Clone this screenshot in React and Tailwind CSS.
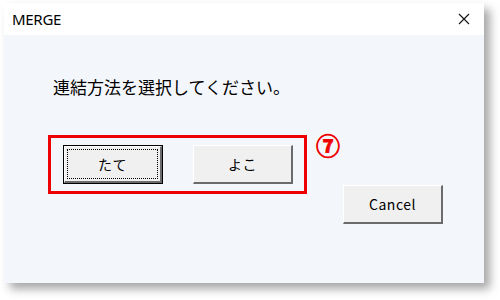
import React from 'react';

const jp = "font-['MS_UI_Gothic','Noto_Sans_CJK_JP',sans-serif]";

function Btn({ label, focused }) {
  const face = (
    <div className="flex flex-1 border-t border-l border-t-white border-l-white border-r-2 border-b-2 border-r-[#6b6b6b] border-b-[#6b6b6b] bg-[#f0f0f0]">
      <div className={`flex flex-1 items-center justify-center m-[2px] text-[14px] tracking-[0.5px] text-black ${focused ? 'border border-dotted border-black' : 'border border-transparent'}`}>
        {label}
      </div>
    </div>
  );
  if (focused) {
    return <div className="flex w-[100px] h-[39px] border border-black">{face}</div>;
  }
  return <div className="flex w-[100px] h-[39px]">{face}</div>;
}

export default function App() {
  return (
    <div className="w-[500px] h-[300px] bg-white pt-[3px] pl-[4px]">
      <div className={`w-[480px] h-[280px] flex flex-col bg-[#f3f6fb] shadow-[6px_6px_9px_rgba(0,0,0,0.35)] ${jp}`}>
        <div className="h-[32px] bg-white flex items-center justify-between pl-[8px] pr-[14px]">
          <span className="text-[15px] text-black font-['Noto_Sans',sans-serif] tracking-[-0.3px]">MERGE</span>
          <svg width="12" height="12" viewBox="0 0 12 12">
            <path d="M1 1 L11 11 M11 1 L1 11" stroke="#111" strokeWidth="1.1" fill="none" />
          </svg>
        </div>
        <div className="flex flex-col pl-[44px]">
          <p className="mt-[40px] ml-[5px] text-[17px] leading-[24px] text-black">連結方法を選択してください。</p>
          <div className="mt-[36px] flex items-start">
            <div className="w-[259px] h-[59px] border-[3px] border-[#ee0000] flex items-start pt-[7px] pl-[12px] gap-[30px]">
              <Btn label="たて" focused />
              <Btn label="よこ" />
            </div>
            <span className="ml-[9px] -mt-[4px] text-[24px] leading-[28px] font-bold text-[#ee0000] [-webkit-text-stroke:0.8px_#ee0000]">⑦</span>
            <div className="ml-[3px] mt-[50px]">
              <Btn label="Cancel" />
            </div>
          </div>
        </div>
      </div>
    </div>
  );
}
